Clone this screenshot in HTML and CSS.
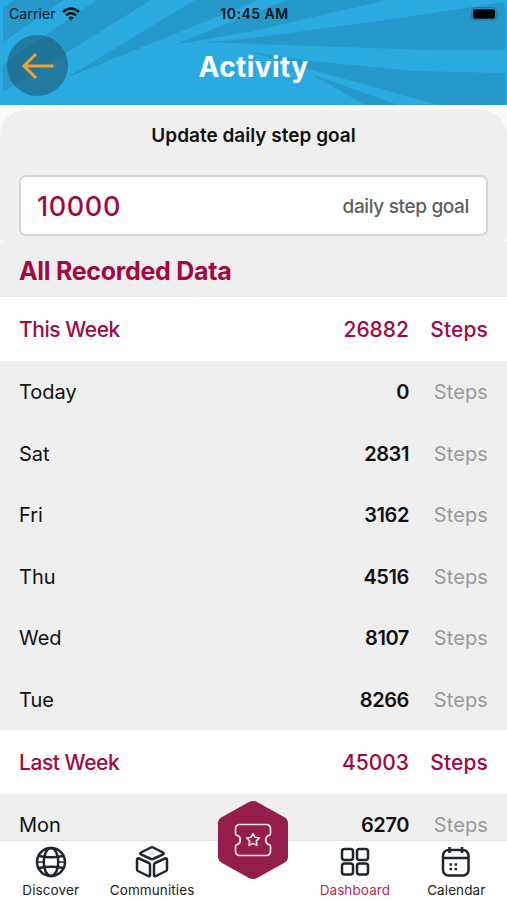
FILE: index.html
```html
<!DOCTYPE html>
<html lang="en">
<head>
<meta charset="UTF-8" />
<meta name="viewport" content="width=device-width, initial-scale=1" />
<title>Activity</title>
<link rel="stylesheet" href="styles.css">
</head>
<body>

<header class="header">
  <svg class="rays" viewBox="0 0 507 105" aria-hidden="true">
    <path d="M3 8 L14 0 H64 L3 42Z"/>
    <path d="M3 64 L97 0 H151 L3 92Z"/>
    <path d="M66 78 L195 0 H259 L177 33Z"/>
    <path d="M174 45 L220 26 L288 0 H387 L253 31Z"/>
    <path d="M207 42 L253 38 L400 18 L505 2 V50 L430 50 L253 44Z"/>
    <path d="M250 52 L310 61 L415 71 L505 73 V105 H438 L309 69Z"/>
    <path d="M309 73 L398 105 H365Z"/>
  </svg>
  <div class="status-bar">
    <span class="carrier">Carrier
      <svg width="18" height="14" viewBox="0 0 18 14" fill="none" stroke="#06141b" stroke-width="2.6">
        <path d="M1 5 Q9 -2 17 5 M4 8.3 Q9 4 14 8.3"/>
        <path d="M6.3 10.7 Q9 8.5 11.7 10.7 L9 13.4Z" fill="#06141b" stroke="none"/>
      </svg>
    </span>
    <span class="time">10:45 AM</span>
    <svg class="battery" width="29" height="14" viewBox="0 0 29 14">
      <rect x=".7" y=".7" width="24.5" height="12.4" rx="3.5" fill="none" stroke="#1e7fab" stroke-width="1.3"/>
      <rect x="2" y="2.3" width="22" height="9.4" rx="2" fill="#000"/>
      <path d="M26.5 4.5 Q29 7 26.5 9.5Z" fill="#1e7fab"/>
    </svg>
  </div>
  <div class="title-bar">
    <button class="back" aria-label="Back">
      <svg width="34" height="28" viewBox="0 0 34 28" fill="none" stroke="#f5a02c" stroke-width="3">
        <path d="M32.5 14 H3 M15 2 L3 14 L15 26"/>
      </svg>
    </button>
    <h1>Activity</h1>
  </div>
</header>

<main>
  <section class="goal">
    <h2>Update daily step goal</h2>
    <label class="goal-field">
      <span class="goal-value">10000</span>
      <span class="goal-hint">daily step goal</span>
    </label>
  </section>

  <h2 class="section-title">All Recorded Data</h2>

  <ul class="records">
    <li class="week"><span>This Week</span><b>26882</b><i>Steps</i></li>
    <li><span>Today</span><b>0</b><i>Steps</i></li>
    <li><span>Sat</span><b>2831</b><i>Steps</i></li>
    <li><span>Fri</span><b>3162</b><i>Steps</i></li>
    <li><span>Thu</span><b>4516</b><i>Steps</i></li>
    <li><span>Wed</span><b>8107</b><i>Steps</i></li>
    <li><span>Tue</span><b>8266</b><i>Steps</i></li>
    <li class="week"><span>Last Week</span><b>45003</b><i>Steps</i></li>
    <li><span>Mon</span><b>6270</b><i>Steps</i></li>
  </ul>
</main>

<nav class="tabs">
  <a class="tab" href="#">
    <svg width="32" height="32" viewBox="0 0 32 32">
      <circle cx="16" cy="16" r="14"/>
      <ellipse cx="16" cy="16" rx="7.3" ry="14"/>
      <path d="M4 10 Q16 12.5 28 10 M4 22 Q16 19.5 28 22"/>
      <path d="M2 16 H9 M23 16 H30" stroke-width="1.5"/>
    </svg>
    <span>Discover</span>
  </a>
  <a class="tab" href="#">
    <svg width="34" height="32" viewBox="0 0 34 32">
      <path d="M16 1.5 Q17 1 18 1.5 L28 6.5 Q29.5 7.5 28 8.5 L18 13 Q17 13.5 16 13 L6 8.5 Q4.5 7.5 6 6.5Z"/>
      <path d="M4 12.5 L14 17 Q15 17.5 15 19 V29 Q15 31 13 30 L3 25 Q2 24.5 2 23.5 V14 Q2 11.7 4 12.5Z"/>
      <path d="M30 12.5 L20 17 Q19 17.5 19 19 V29 Q19 31 21 30 L31 25 Q32 24.5 32 23.5 V14 Q32 11.7 30 12.5Z"/>
    </svg>
    <span>Communities</span>
  </a>
  <a class="tab tab-rewards" href="#" aria-label="Rewards">
    <svg class="hexagon" width="70" height="80" viewBox="0 0 70 80">
      <path d="M31 2 Q35 0 39 2 L66 17 Q70 19.5 70 23 V57 Q70 60.5 66 63 L39 78 Q35 80 31 78 L4 63 Q0 60.5 0 57 V23 Q0 19.5 4 17Z" fill="#951d4b"/>
      <path d="M22 24.5 H48 Q52.5 24.5 52.5 29 V33.5 Q52.5 35 51 35.3 A5 5 0 0 0 51 44.7 Q52.5 45 52.5 46.5 V51 Q52.5 55.5 48 55.5 H22 Q17.5 55.5 17.5 51 V46.5 Q17.5 45 19 44.7 A5 5 0 0 0 19 35.3 Q17.5 35 17.5 33.5 V29 Q17.5 24.5 22 24.5Z" fill="none" stroke="#f3e1e8" stroke-width="1.7"/>
      <path d="M35 33.5 L37 37.3 L41.3 38 L38.3 41.1 L39 45.4 L35 43.4 L31 45.4 L31.7 41.1 L28.7 38 L33 37.3Z" fill="none" stroke="#f3e1e8" stroke-width="1.6" stroke-linejoin="round"/>
    </svg>
  </a>
  <a class="tab active" href="#">
    <svg width="30" height="32" viewBox="0 0 30 32">
      <rect x="2" y="3" width="11" height="11" rx="2.5"/>
      <rect x="17" y="3" width="11" height="11" rx="2.5"/>
      <rect x="2" y="17.5" width="11" height="11" rx="2.5"/>
      <rect x="17" y="17.5" width="11" height="11" rx="2.5"/>
    </svg>
    <span>Dashboard</span>
  </a>
  <a class="tab" href="#">
    <svg width="30" height="32" viewBox="0 0 30 32">
      <rect x="2" y="4" width="25.5" height="25.5" rx="5.5"/>
      <path d="M2 12 H27.5 M8.5 1 V7 M21 1 V7"/>
      <path d="M8.5 18.5 H11 M13.5 18.5 H16 M8.5 23 H11 M13.5 23 H16" stroke-width="2.5"/>
    </svg>
    <span>Calendar</span>
  </a>
</nav>

</body>
</html>
```
FILE: styles.css
```css
* {
  box-sizing: border-box;
}
body {
  margin: 0;
  height: 900px;
  overflow: hidden;
  display: flex;
  flex-direction: column;
  background: #fafafa;
  color: #111;
  font-family: "Inter", "Noto Sans", sans-serif;
}
h1, h2, ul {
  margin: 0;
  padding: 0;
}
.header {
  position: relative;
  flex: none;
  height: 105px;
  background: #29abe2;
}
.rays {
  position: absolute;
  top: 0;
  left: 0;
  width: 507px;
  height: 105px;
  fill: #2599ca;
}
.status-bar {
  position: relative;
  display: grid;
  grid-template-columns: 1fr auto 1fr;
  align-items: center;
  height: 27px;
  padding: 0 7px 0 9px;
  font-size: 14px;
  color: #06141b;
}
.carrier {
  display: flex;
  align-items: center;
  gap: 6px;
  letter-spacing: 0.1px;
}
.time {
  font-weight: 600;
  letter-spacing: 0.5px;
}
.battery {
  justify-self: end;
}
.title-bar {
  position: relative;
  display: grid;
  grid-template-columns: 61px 1fr 61px;
  align-items: center;
  height: 77px;
  padding: 0 7px;
}
.back {
  display: flex;
  align-items: center;
  justify-content: center;
  width: 61px;
  height: 61px;
  border: none;
  border-radius: 50%;
  padding: 0;
  background: rgba(28, 91, 119, 0.6);
}
.title-bar h1 {
  padding-top: 2px;
  font-size: 28px;
  font-weight: 700;
  letter-spacing: 0.4px;
  text-align: center;
  color: #fff;
}
main {
  flex: 1;
  min-height: 0;
  overflow: hidden;
  padding-top: 5px;
}
.goal {
  height: 132px;
  padding: 12px 19px 0;
  border-radius: 26px 26px 5px 5px;
  background: #efefef;
}
.goal h2 {
  margin-bottom: 25px;
  font-size: 19px;
  line-height: 28px;
  font-weight: 600;
  text-align: center;
}
.goal-field {
  display: flex;
  align-items: center;
  justify-content: space-between;
  height: 61px;
  padding: 1px 17px 0 16px;
  border: 2px solid #d6d6d6;
  border-radius: 7px;
  background: #fff;
}
.goal-value {
  font-size: 27px;
  font-weight: 500;
  letter-spacing: 0.6px;
  color: #a3083f;
}
.goal-hint {
  font-size: 19px;
  font-weight: 500;
  letter-spacing: -0.35px;
  color: #606060;
}
.section-title {
  height: 55px;
  padding: 0 19px;
  background: #efefef;
  font-size: 25px;
  line-height: 58px;
  font-weight: 700;
  letter-spacing: -0.3px;
  color: #a3083f;
}
.records {
  list-style: none;
  background: #efefef;
}
.records li {
  display: grid;
  grid-template-columns: 1fr auto 79px;
  align-items: center;
  height: 61.5px;
  padding: 1px 19px 0;
  font-size: 20px;
}
.records b {
  font-weight: 600;
  letter-spacing: -0.4px;
}
.records i {
  font-style: normal;
  text-align: right;
  letter-spacing: 0.1px;
  color: #999;
}
.records .week {
  height: 64px;
  background: #fff;
  font-size: 21px;
}
.records .week span,
.records .week b,
.records .week i {
  font-weight: 500;
  letter-spacing: 0.1px;
  color: #a3083f;
}
.records .week span {
  letter-spacing: -0.45px;
}
.records .week b {
  letter-spacing: 0;
}
.tabs {
  flex: none;
  display: grid;
  grid-template-columns: repeat(5, 1fr);
  height: 60px;
  border-top: 1px solid #e2e2e2;
  background: #fff;
}
.tab {
  display: flex;
  flex-direction: column;
  align-items: center;
  color: #222;
  text-decoration: none;
  font-size: 13.5px;
  letter-spacing: 0.1px;
}
.tab svg {
  height: 32px;
  margin-top: 5px;
  fill: none;
  stroke: #202529;
  stroke-width: 2.5;
}
.tab span {
  margin-top: 4px;
  line-height: 16px;
}
.tab.active {
  color: #b52a57;
}
/* sticks out above the bar */
.tab-rewards {
  position: relative;
}
.tab-rewards .hexagon {
  position: absolute;
  top: -41px;
  height: 80px;
  margin: 0;
  stroke: none;
}
```
